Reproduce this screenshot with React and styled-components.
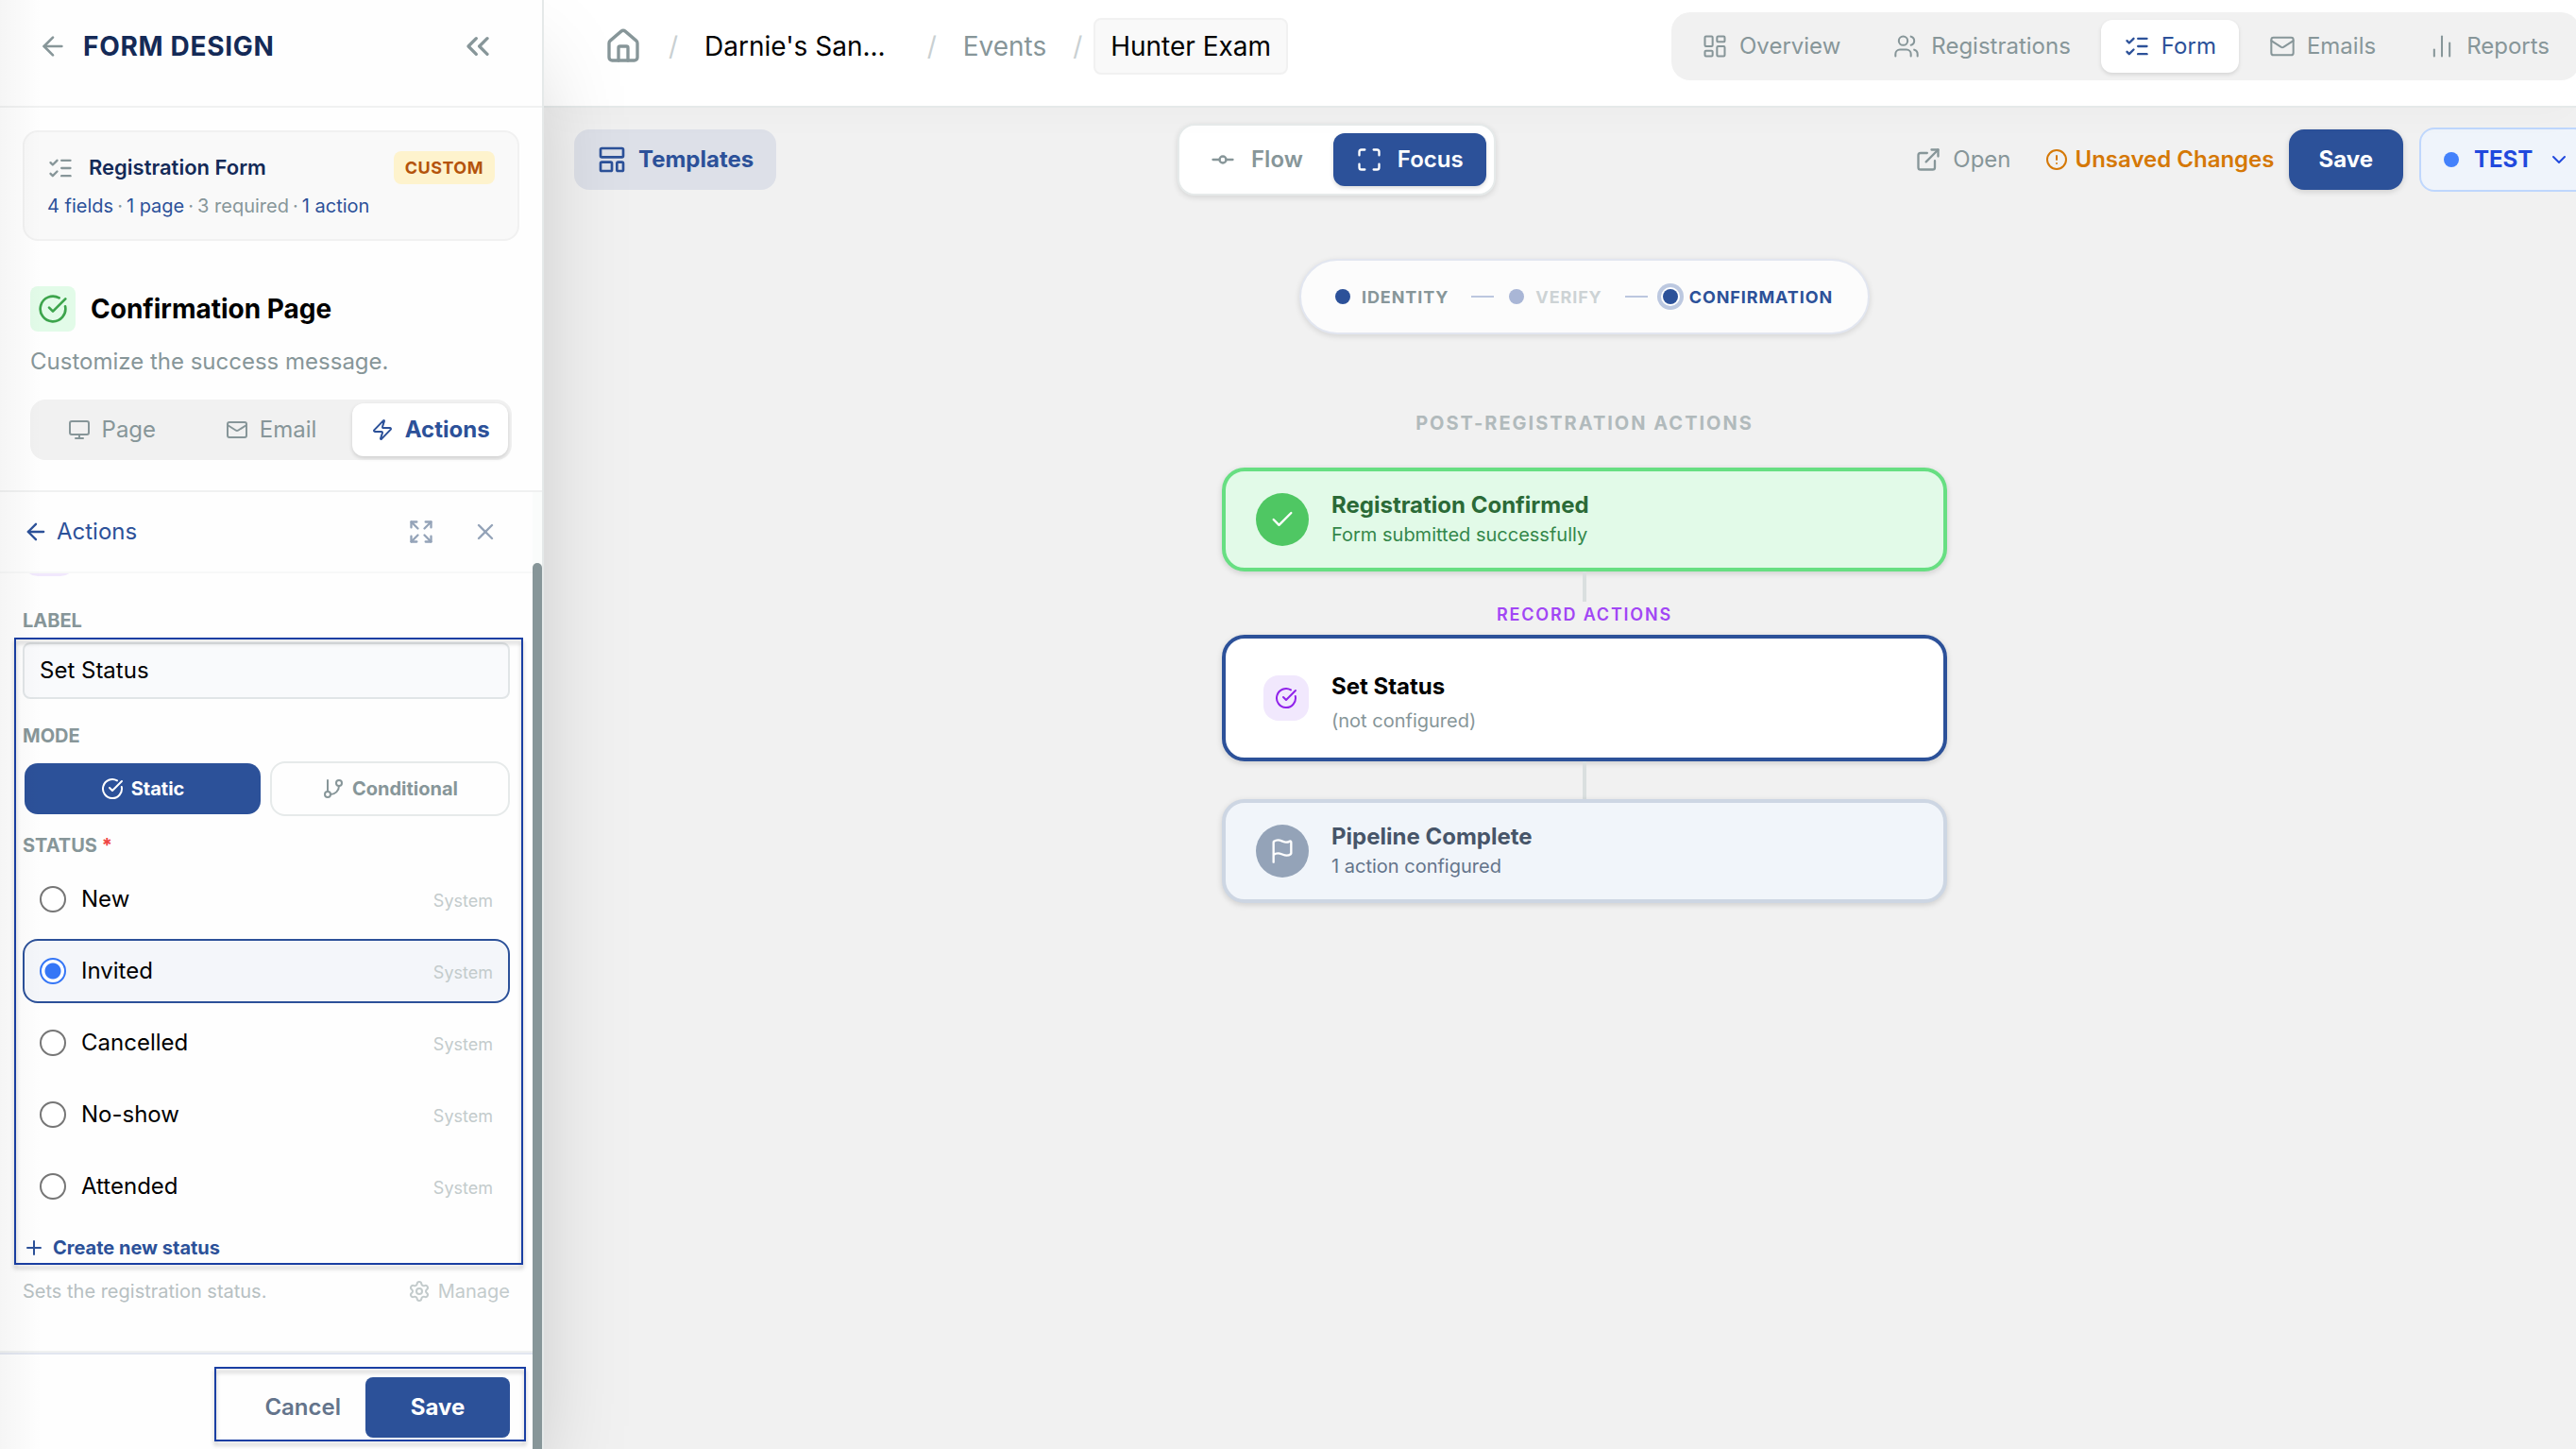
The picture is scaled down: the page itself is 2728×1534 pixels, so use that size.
import styled, { createGlobalStyle, css } from "styled-components"
import {
  ArrowLeft,
  ChartNoAxesColumn,
  Check,
  ChevronDown,
  ChevronsLeft,
  CircleAlert,
  CircleCheckBig,
  Expand,
  ExternalLink,
  Flag,
  GitBranch,
  GitCommitHorizontal,
  House,
  LayoutDashboard,
  LayoutTemplate,
  ListChecks,
  Mail,
  Maximize,
  Monitor,
  Plus,
  Settings,
  Users,
  X,
  Zap,
} from "lucide-react"

const blue = "#2c5199"
const gray = "#879699"

const statuses = ["New", "Invited", "Cancelled", "No-show", "Attended"]

const navItems = [
  { label: "Overview", icon: LayoutDashboard },
  { label: "Registrations", icon: Users },
  { label: "Form", icon: ListChecks, active: true },
  { label: "Emails", icon: Mail },
  { label: "Reports", icon: ChartNoAxesColumn },
]

const pageTabs = [
  { label: "Page", icon: Monitor },
  { label: "Email", icon: Mail },
  { label: "Actions", icon: Zap, active: true },
]

export default function App() {
  return (
    <Screen>
      <GlobalStyle />
      <Sidebar />
      <Main>
        <TopBar />
        <Canvas>
          <Toolbar />
          <Steps />
          <Pipeline />
        </Canvas>
      </Main>
    </Screen>
  )
}

function Sidebar() {
  return (
    <Side>
      <SideHeader>
        <ArrowLeft size={32} color={gray} />
        <SideTitle>FORM DESIGN</SideTitle>
        <ChevronsLeft size={40} color={gray} />
      </SideHeader>

      <FormCard>
        <FormCardTop>
          <ListChecks size={28} color={gray} />
          <FormName>Registration Form</FormName>
          <Badge>CUSTOM</Badge>
        </FormCardTop>
        <FormStats>
          <b>4 fields</b> · <b>1 page</b> · <span>3 required</span> · <b>1 action</b>
        </FormStats>
      </FormCard>

      <PageInfo>
        <PageHeading>
          <PageIcon>
            <CircleCheckBig size={32} />
          </PageIcon>
          Confirmation Page
        </PageHeading>
        <PageText>Customize the success message.</PageText>
        <Tabs>
          {pageTabs.map(({ label, icon: Icon, active }) => (
            <Tab key={label} $active={active}>
              <Icon size={24} />
              {label}
            </Tab>
          ))}
        </Tabs>
      </PageInfo>

      <Panel>
        <PanelMain>
          <PanelHeader>
            <Back>
              <ArrowLeft size={28} />
              Actions
            </Back>
            <Expand size={28} />
            <X size={28} />
          </PanelHeader>
          <PanelBody>
            <ClippedIcon />
            <FieldLabel $top={35}>LABEL</FieldLabel>
            <TextField>Set Status</TextField>
            <FieldLabel $top={27}>MODE</FieldLabel>
            <Modes>
              <Mode $active>
                <CircleCheckBig size={24} />
                Static
              </Mode>
              <Mode>
                <GitBranch size={24} />
                Conditional
              </Mode>
            </Modes>
            <FieldLabel $top={19}>
              STATUS <Required>*</Required>
            </FieldLabel>
            <StatusList>
              {statuses.map((status) => (
                <StatusRow key={status} $selected={status === "Invited"}>
                  <Radio $selected={status === "Invited"} />
                  <StatusName>{status}</StatusName>
                  <StatusKind>System</StatusKind>
                </StatusRow>
              ))}
            </StatusList>
            <CreateStatus>
              <Plus size={24} />
              Create new status
            </CreateStatus>
            <Hint>
              <span>Sets the registration status.</span>
              <Manage>
                <Settings size={24} />
                Manage
              </Manage>
            </Hint>
            <FieldsOutline />
          </PanelBody>
          <PanelFooter>
            <FooterActions>
              <Cancel>Cancel</Cancel>
              <PanelSave>Save</PanelSave>
            </FooterActions>
          </PanelFooter>
        </PanelMain>
        <ScrollTrack>
          <ScrollThumb />
        </ScrollTrack>
      </Panel>
      <EdgeShade />
    </Side>
  )
}

function TopBar() {
  return (
    <Header>
      <Crumbs>
        <House size={40} color={gray} />
        <Slash $left={28} $right={29}>/</Slash>
        <Crumb $dark>Darnie's San...</Crumb>
        <Slash $left={44} $right={29}>/</Slash>
        <Crumb>Events</Crumb>
        <Slash $left={28} $right={13}>/</Slash>
        <CurrentCrumb>Hunter Exam</CurrentCrumb>
      </Crumbs>
      <Nav>
        {navItems.map(({ label, icon: Icon, active }) => (
          <NavItem key={label} $active={active}>
            <Icon size={28} strokeWidth={active ? 2 : 1.75} />
            {label}
          </NavItem>
        ))}
      </Nav>
    </Header>
  )
}

function Toolbar() {
  return (
    <Tools>
      <Templates>
        <LayoutTemplate size={32} />
        Templates
      </Templates>
      <ViewSwitch>
        <View>
          <GitCommitHorizontal size={28} />
          Flow
        </View>
        <View $active>
          <Maximize size={28} />
          Focus
        </View>
      </ViewSwitch>
      <ToolsRight>
        <Open>
          <ExternalLink size={28} />
          Open
        </Open>
        <Unsaved>
          <CircleAlert size={24} />
          Unsaved Changes
        </Unsaved>
        <SaveButton>Save</SaveButton>
        <TestButton>
          <TestDot />
          TEST
          <ChevronDown size={24} />
        </TestButton>
      </ToolsRight>
    </Tools>
  )
}

function Steps() {
  return (
    <StepsPill>
      <Step>
        <StepDot />
        IDENTITY
      </Step>
      <StepLine />
      <Step $state="disabled">
        <StepDot $state="disabled" />
        VERIFY
      </Step>
      <StepLine />
      <Step $state="current">
        <StepDot $state="current" />
        CONFIRMATION
      </Step>
    </StepsPill>
  )
}

function Pipeline() {
  return (
    <Flow>
      <FlowTitle>POST-REGISTRATION ACTIONS</FlowTitle>
      <FlowCard $border="#67df82" $bg="#e2fae8">
        <RoundIcon $bg="#4fc763">
          <Check size={28} />
        </RoundIcon>
        <CardText>
          <CardTitle $color="#2b6a37">Registration Confirmed</CardTitle>
          <CardSub $color="#34874a">Form submitted successfully</CardSub>
        </CardText>
      </FlowCard>
      <Connector $height={32} />
      <GroupLabel>RECORD ACTIONS</GroupLabel>
      <FlowCard $border={blue} $bg="#fff" $tall>
        <SquareIcon>
          <CircleCheckBig size={24} />
        </SquareIcon>
        <CardText $gap={7} $top={11}>
          <CardTitle $color="#000">Set Status</CardTitle>
          <CardSub $color={gray}>(not configured)</CardSub>
        </CardText>
      </FlowCard>
      <Connector $height={40} />
      <FlowCard $border="#cdd6e3" $bg="#f1f5fa">
        <RoundIcon $bg="#94a3b8">
          <Flag size={28} />
        </RoundIcon>
        <CardText>
          <CardTitle $color="#475569">Pipeline Complete</CardTitle>
          <CardSub $color="#64748b">1 action configured</CardSub>
        </CardText>
      </FlowCard>
    </Flow>
  )
}

const GlobalStyle = createGlobalStyle`
  * {
    box-sizing: border-box;
  }
  body {
    margin: 0;
    overflow: hidden;
    font-family: Inter, "Liberation Sans", sans-serif;
    font-size: 24px;
    line-height: 1.5;
    color: #000;
  }
  svg {
    flex-shrink: 0;
  }
`
const Screen = styled.div`
  display: flex;
  width: 2728px;
  height: 1534px;
  overflow: hidden;
  background: #f1f1f1;
`

/* sidebar */
const Side = styled.aside`
  position: relative;
  z-index: 2;
  display: flex;
  flex-direction: column;
  flex-shrink: 0;
  width: 576px;
  height: 1534px;
  background: #fefefe;
  border-right: 2px solid #e5e9e9;
  box-shadow: 0 50px 100px -24px rgba(0, 0, 0, .25);
`
const EdgeShade = styled.div`
  position: absolute;
  top: 0;
  left: 0;
  width: 44px;
  height: 100%;
  background: linear-gradient(to right, rgba(0, 0, 0, .035), rgba(0, 0, 0, 0));
  pointer-events: none;
`
const SideHeader = styled.div`
  display: flex;
  align-items: center;
  height: 114px;
  padding: 0 48px 14px 40px;
  border-bottom: 2px solid #f0f1f1;
`
const SideTitle = styled.div`
  flex: 1;
  padding-left: 16px;
  font-size: 28px;
  font-weight: 700;
  letter-spacing: .7px;
  color: #142a57;
`
const FormCard = styled.div`
  height: 117px;
  margin: 24px 24px 0;
  padding: 20px 24px;
  background: #f9f9f9;
  border: 2px solid #f1f1f1;
  border-radius: 16px;
`
const FormCardTop = styled.div`
  display: flex;
  align-items: center;
  height: 35px;
`
const FormName = styled.div`
  flex: 1;
  padding-left: 16px;
  font-size: 22px;
  font-weight: 600;
  color: #142a57;
`
const Badge = styled.div`
  display: flex;
  align-items: center;
  height: 35px;
  padding: 0 12px;
  border-radius: 8px;
  background: #fef3cd;
  color: #b4540c;
  font-size: 18px;
  font-weight: 700;
  letter-spacing: .5px;
`
const FormStats = styled.div`
  margin-top: 11px;
  font-size: 20px;
  line-height: 24px;
  word-spacing: -1.6px;
  color: ${gray};
  b {
    font-weight: 400;
    color: ${blue};
  }
  b, span {
    word-spacing: 0;
  }
`
const PageInfo = styled.div`
  height: 266px;
  padding: 48px 32px 0;
  border-bottom: 2px solid #f0f1f1;
`
const PageHeading = styled.div`
  display: flex;
  align-items: center;
  gap: 16px;
  height: 48px;
  font-size: 28px;
  font-weight: 700;
`
const PageIcon = styled.div`
  display: flex;
  align-items: center;
  justify-content: center;
  width: 48px;
  height: 48px;
  border-radius: 8px;
  background: #e2fbe8;
  color: #3da44c;
`
const PageText = styled.div`
  margin-top: 16px;
  line-height: 32px;
  color: ${gray};
`
const Tabs = styled.div`
  display: grid;
  grid-template-columns: repeat(3, 1fr);
  gap: 4px;
  height: 64px;
  margin-top: 24px;
  padding: 4px;
  border-radius: 16px;
  background: #f1f1f1;
`
const Tab = styled.div`
  display: flex;
  align-items: center;
  justify-content: center;
  gap: 12px;
  border-radius: 12px;
  color: ${gray};
  ${({ $active }) => $active && css`
    background: #fff;
    color: ${blue};
    font-weight: 650;
    box-shadow: 0 2px 4px rgba(0, 0, 0, .15);
  `}
`
const Panel = styled.div`
  display: flex;
  flex: 1;
  min-height: 0;
`
const PanelMain = styled.div`
  display: flex;
  flex-direction: column;
  flex: 1;
`
const PanelHeader = styled.div`
  display: flex;
  align-items: center;
  height: 86px;
  padding: 0 36px 0 24px;
  border-bottom: 2px solid #f7f8f8;
  color: #94a3b8;
  svg + svg {
    margin-left: 40px;
  }
`
const Back = styled.div`
  display: flex;
  align-items: center;
  flex: 1;
  gap: 8px;
  color: ${blue};
`
const PanelBody = styled.div`
  position: relative;
  height: 823px;
  padding: 0 24px;
`
const ClippedIcon = styled.div`
  height: 3px;
  overflow: hidden;
  &::after {
    content: "";
    display: block;
    width: 56px;
    height: 56px;
    margin-top: -53px;
    border-radius: 16px;
    background: #f1e8fd;
  }
`
const FieldLabel = styled.div`
  margin-top: ${({ $top }) => $top}px;
  font-size: 20px;
  line-height: 24px;
  font-weight: 650;
  color: ${gray};
`
const Required = styled.span`
  color: #ef4444;
`
const TextField = styled.div`
  display: flex;
  align-items: center;
  height: 60px;
  margin-top: 11px;
  padding: 0 16px;
  border: 2px solid #e1e5e7;
  border-radius: 8px;
  background: #f9fafc;
`
const Modes = styled.div`
  display: grid;
  grid-template-columns: 1fr 1fr;
  gap: 8px;
  height: 58px;
  margin-top: 15px;
`
const Mode = styled.div`
  display: flex;
  align-items: center;
  justify-content: center;
  gap: 8px;
  border: 2px solid #e6eaea;
  border-radius: 16px;
  color: ${gray};
  font-size: 20px;
  font-weight: 650;
  ${({ $active }) => $active && css`
    margin: 2px;
    border: none;
    border-radius: 14px;
    background: ${blue};
    color: #fff;
  `}
`
const StatusList = styled.div`
  display: flex;
  flex-direction: column;
  gap: 8px;
  margin-top: 11px;
`
const StatusRow = styled.div`
  display: flex;
  align-items: center;
  gap: 16px;
  height: 68px;
  padding: 0 16px;
  border: 2px solid transparent;
  border-radius: 16px;
  ${({ $selected }) => $selected && css`
    border-color: ${blue};
    background: #f4f6fa;
  `}
`
const Radio = styled.span`
  width: 28px;
  height: 28px;
  border: 2px solid #767676;
  border-radius: 50%;
  background: #fff;
  ${({ $selected }) => $selected && css`
    border-color: #3576f6;
    background: radial-gradient(circle, #3576f6 8px, #fff 9px);
  `}
`
const StatusName = styled.span`
  flex: 1;
`
const StatusKind = styled.span`
  padding-top: 2px;
  font-size: 18px;
  color: #c3cbcc;
`
const CreateStatus = styled.div`
  display: flex;
  align-items: center;
  gap: 8px;
  height: 28px;
  margin-top: 17px;
  color: ${blue};
  font-size: 20px;
  font-weight: 650;
`
const Hint = styled.div`
  display: flex;
  align-items: center;
  justify-content: space-between;
  height: 24px;
  margin-top: 20px;
  font-size: 20px;
  color: #b7c0c2;
`
const Manage = styled.span`
  display: flex;
  align-items: center;
  gap: 8px;
  color: #c3cbcc;
`
const FieldsOutline = styled.div`
  position: absolute;
  top: 68px;
  left: 15px;
  width: 539px;
  height: 664px;
  border: 2px solid #1a3fa3;
  filter: drop-shadow(0 4px 2px rgba(0, 0, 0, .25));
`
const PanelFooter = styled.div`
  flex: 1;
  display: flex;
  justify-content: flex-end;
  align-items: flex-start;
  padding: 13px 7px 0 0;
  border-top: 2px solid #e2e6f0;
  box-shadow: 0 -2px 0 #eff1f1;
  margin-top: 2px;
`
const FooterActions = styled.div`
  position: relative;
  display: flex;
  align-items: center;
  justify-content: flex-end;
  width: 330px;
  height: 79px;
  padding: 7px 17px 0 0;
  &::before {
    content: "";
    position: absolute;
    inset: 0;
    border: 2px solid #1a3fa3;
    filter: drop-shadow(0 4px 2px rgba(0, 0, 0, .25));
  }
`
const Cancel = styled.div`
  padding: 0 26px;
  color: #64748b;
  font-weight: 600;
`
const PanelSave = styled.div`
  display: flex;
  align-items: center;
  justify-content: center;
  width: 153px;
  height: 64px;
  border-radius: 8px;
  background: ${blue};
  color: #fff;
  font-weight: 700;
`
const ScrollTrack = styled.div`
  width: 10px;
  padding-top: 75px;
  background: #fafcfb;
`
const ScrollThumb = styled.div`
  height: 100%;
  border-radius: 5px 5px 0 0;
  background: ${gray};
`

/* top bar */
const Main = styled.main`
  flex: 1;
  min-width: 0;
`
const Header = styled.header`
  position: relative;
  z-index: 1;
  display: flex;
  justify-content: space-between;
  height: 114px;
  padding: 13px 0 0 64px;
  background: #fff;
  border-bottom: 2px solid #e5e9e9;
  box-shadow: 0 8px 40px rgba(0, 0, 0, .025);
`
const Crumbs = styled.div`
  display: flex;
  align-items: center;
  height: 72px;
  font-size: 28px;
  white-space: nowrap;
`
const Slash = styled.span`
  width: 9px;
  margin: 0 ${({ $right }) => $right}px 0 ${({ $left }) => $left}px;
  color: #c9d0d2;
`
const Crumb = styled.span`
  color: ${({ $dark }) => ($dark ? "#000" : gray)};
`
const CurrentCrumb = styled.span`
  display: flex;
  align-items: center;
  height: 60px;
  padding: 0 16px;
  border: 2px solid #f1f1f1;
  border-radius: 8px;
  background: #f9f9f9;
`
const Nav = styled.nav`
  display: flex;
  flex-shrink: 0;
  gap: 8px;
  height: 72px;
  margin-right: -4px;
  padding: 8px;
  border-radius: 20px;
  background: #f1f1f1;
`
const NavItem = styled.div`
  display: flex;
  align-items: center;
  gap: 12px;
  padding: 0 24px;
  border-radius: 12px;
  color: ${gray};
  ${({ $active }) => $active && css`
    background: #fff;
    color: ${blue};
    box-shadow: 0 2px 4px rgba(0, 0, 0, .12);
  `}
`

/* canvas */
const Canvas = styled.section`
  display: flex;
  flex-direction: column;
`
const Tools = styled.div`
  display: flex;
  align-items: center;
  height: 76px;
  margin-top: 17px;
  padding-left: 32px;
  white-space: nowrap;
`
const Templates = styled.div`
  display: flex;
  align-items: center;
  gap: 12px;
  width: 214px;
  height: 64px;
  padding-left: 24px;
  border-radius: 16px;
  background: #dde0e8;
  color: ${blue};
  font-weight: 650;
`
const ViewSwitch = styled.div`
  display: flex;
  gap: 8px;
  height: 76px;
  margin-left: 425px;
  padding: 8px;
  border: 2px solid #e6eaea;
  border-radius: 18px;
  background: #fff;
  box-shadow: 0 2px 6px rgba(0, 0, 0, .12);
`
const View = styled.div`
  display: flex;
  align-items: center;
  gap: 16px;
  padding: 0 24px;
  border-radius: 12px;
  color: ${gray};
  font-weight: 600;
  ${({ $active }) => $active && css`
    background: ${blue};
    color: #fff;
    box-shadow: 0 2px 4px rgba(0, 0, 0, .15);
  `}
`
const ToolsRight = styled.div`
  display: flex;
  align-items: center;
  flex-shrink: 0;
  margin-left: auto;
  margin-right: -14px;
`
const Open = styled.div`
  display: flex;
  align-items: center;
  gap: 12px;
  margin-right: 36px;
  color: ${gray};
`
const Unsaved = styled.div`
  display: flex;
  align-items: center;
  gap: 8px;
  margin-right: 15px;
  color: #d57806;
  font-weight: 600;
`
const SaveButton = styled.div`
  display: flex;
  align-items: center;
  height: 64px;
  margin-right: 17px;
  padding: 0 32px;
  border-radius: 16px;
  background: ${blue};
  color: #fff;
  font-weight: 700;
  box-shadow: 0 2px 6px rgba(0, 0, 0, .15);
`
const TestButton = styled.div`
  display: flex;
  align-items: center;
  gap: 16px;
  width: 180px;
  height: 68px;
  padding-left: 24px;
  border: 2px solid #bfd7fd;
  border-radius: 16px;
  background: #eff4fb;
  color: #2149dd;
  font-weight: 700;
`
const TestDot = styled.span`
  width: 16px;
  height: 16px;
  border-radius: 50%;
  background: #4381fb;
`
const StepsPill = styled.div`
  display: flex;
  align-items: center;
  align-self: center;
  width: 604px;
  height: 80px;
  margin-top: 67px;
  margin-left: 52px;
  padding-left: 36px;
  border: 2px solid #e2e6f0;
  border-radius: 40px;
  background: #fcfcfc;
  box-shadow: 0 2px 6px rgba(0, 0, 0, .12);
`
const Step = styled.div`
  display: flex;
  align-items: center;
  gap: 12px;
  font-size: 18px;
  font-weight: 650;
  letter-spacing: .9px;
  color: ${({ $state }) => ({ disabled: "#cdd3d5", current: blue })[$state] || gray};
`
const StepDot = styled.span`
  width: 16px;
  height: 16px;
  border-radius: 50%;
  background: ${({ $state }) => ($state === "disabled" ? "#a9b6d6" : blue)};
  ${({ $state }) => $state === "current" && css`
    box-shadow: 0 0 0 2px #fff, 0 0 0 6px #bcc8e0;
  `}
`
const StepLine = styled.span`
  width: 24px;
  height: 2px;
  margin: 0 16px 0 24px;
  background: #bcc7df;
`
const Flow = styled.div`
  display: flex;
  flex-direction: column;
  align-items: center;
  padding: 82px 0 0 52px;
`
const FlowTitle = styled.div`
  margin-bottom: 35px;
  font-size: 20px;
  line-height: 24px;
  font-weight: 650;
  letter-spacing: 2px;
  color: #b1babc;
`
const FlowCard = styled.div`
  display: flex;
  align-items: center;
  width: 768px;
  height: ${({ $tall }) => ($tall ? 134 : 110)}px;
  padding-left: ${({ $tall }) => ($tall ? 40 : 32)}px;
  border: 4px solid ${({ $border }) => $border};
  border-radius: 24px;
  background: ${({ $bg }) => $bg};
  box-shadow: 0 2px 6px rgba(0, 0, 0, .15);
`
const RoundIcon = styled.div`
  display: flex;
  align-items: center;
  justify-content: center;
  width: 56px;
  height: 56px;
  border-radius: 50%;
  background: ${({ $bg }) => $bg};
  color: #fff;
`
const SquareIcon = styled(RoundIcon)`
  width: 48px;
  height: 48px;
  border-radius: 16px;
  background: #f1e8fd;
  color: #9022ea;
`
const CardText = styled.div`
  display: flex;
  flex-direction: column;
  gap: ${({ $gap }) => $gap || 2}px;
  padding: ${({ $top }) => $top || 0}px 0 0 24px;
`
const CardTitle = styled.div`
  line-height: 30px;
  font-weight: 650;
  color: ${({ $color }) => $color};
`
const CardSub = styled.div`
  font-size: 20px;
  line-height: 28px;
  color: ${({ $color }) => $color};
`
const Connector = styled.div`
  width: 4px;
  height: ${({ $height }) => $height}px;
  background: #dadfdf;
`
const GroupLabel = styled.div`
  height: 35px;
  font-size: 18px;
  line-height: 27px;
  font-weight: 600;
  letter-spacing: 1.8px;
  color: #a146f5;
`
